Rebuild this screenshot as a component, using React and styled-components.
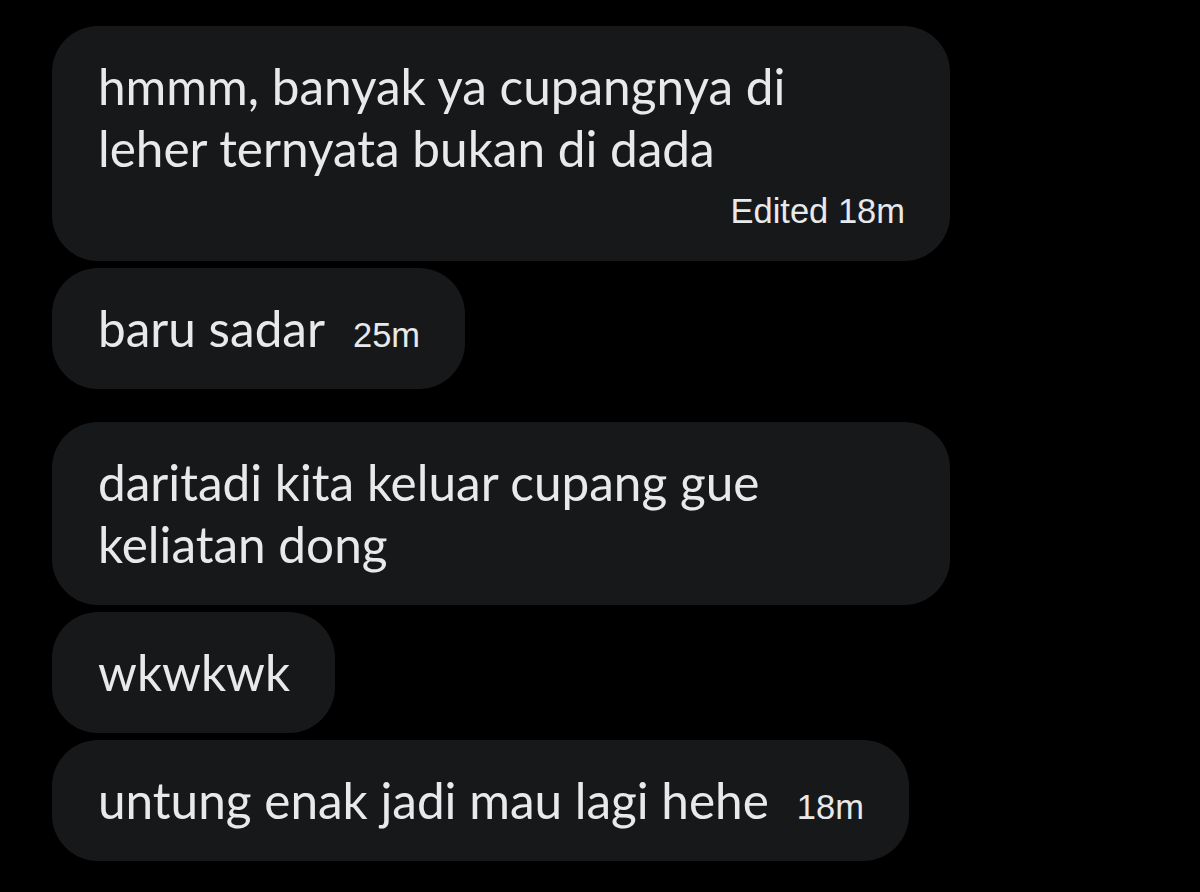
import React from "react";
import styled, { createGlobalStyle } from "styled-components";

const Global = createGlobalStyle`
  html, body { margin: 0; padding: 0; background: #000; }
  body { width: 1200px; height: 892px; overflow: hidden; }
`;

const Thread = styled.div`
  display: flex;
  flex-direction: column;
  align-items: flex-start;
  gap: 7px;
  padding: 26px 0 0 52px;
  background: #000;
  min-height: 892px;
  box-sizing: border-box;
`;

const Bubble = styled.div`
  box-sizing: border-box;
  background: #17181a;
  border-radius: 46px;
  padding: 29px 45px 30px 46px;
  width: ${(p) => (p.$wide ? "898px" : "auto")};
  margin-top: ${(p) => (p.$spaced ? "26px" : "0")};
  display: flex;
  flex-direction: ${(p) => (p.$stacked ? "column" : "row")};
  align-items: ${(p) => (p.$stacked ? "stretch" : "baseline")};
`;

const Text = styled.span`
  font-family: Lato, "Open Sans", sans-serif;
  font-size: 49.5px;
  line-height: 62px;
  color: #e7e9ea;
`;

const Time = styled.span`
  font-family: "Liberation Sans", Arial, sans-serif;
  font-size: 34.5px;
  line-height: 40px;
  color: #e7e9ea;
  margin-left: ${(p) => (p.$own ? "0" : "28px")};
  margin-top: ${(p) => (p.$own ? "12px" : "0")};
  align-self: ${(p) => (p.$own ? "flex-end" : "auto")};
  white-space: nowrap;
`;

export default function App() {
  return (
    <>
      <Global />
      <Thread>
        <Bubble $wide $stacked>
          <Text>
            hmmm, banyak ya cupangnya di
            <br />
            leher ternyata bukan di dada
          </Text>
          <Time $own>Edited 18m</Time>
        </Bubble>
        <Bubble>
          <Text>baru sadar</Text>
          <Time>25m</Time>
        </Bubble>
        <Bubble $wide $spaced>
          <Text>
            daritadi kita keluar cupang gue
            <br />
            keliatan dong
          </Text>
        </Bubble>
        <Bubble>
          <Text>wkwkwk</Text>
        </Bubble>
        <Bubble>
          <Text>untung enak jadi mau lagi hehe</Text>
          <Time>18m</Time>
        </Bubble>
      </Thread>
    </>
  );
}
